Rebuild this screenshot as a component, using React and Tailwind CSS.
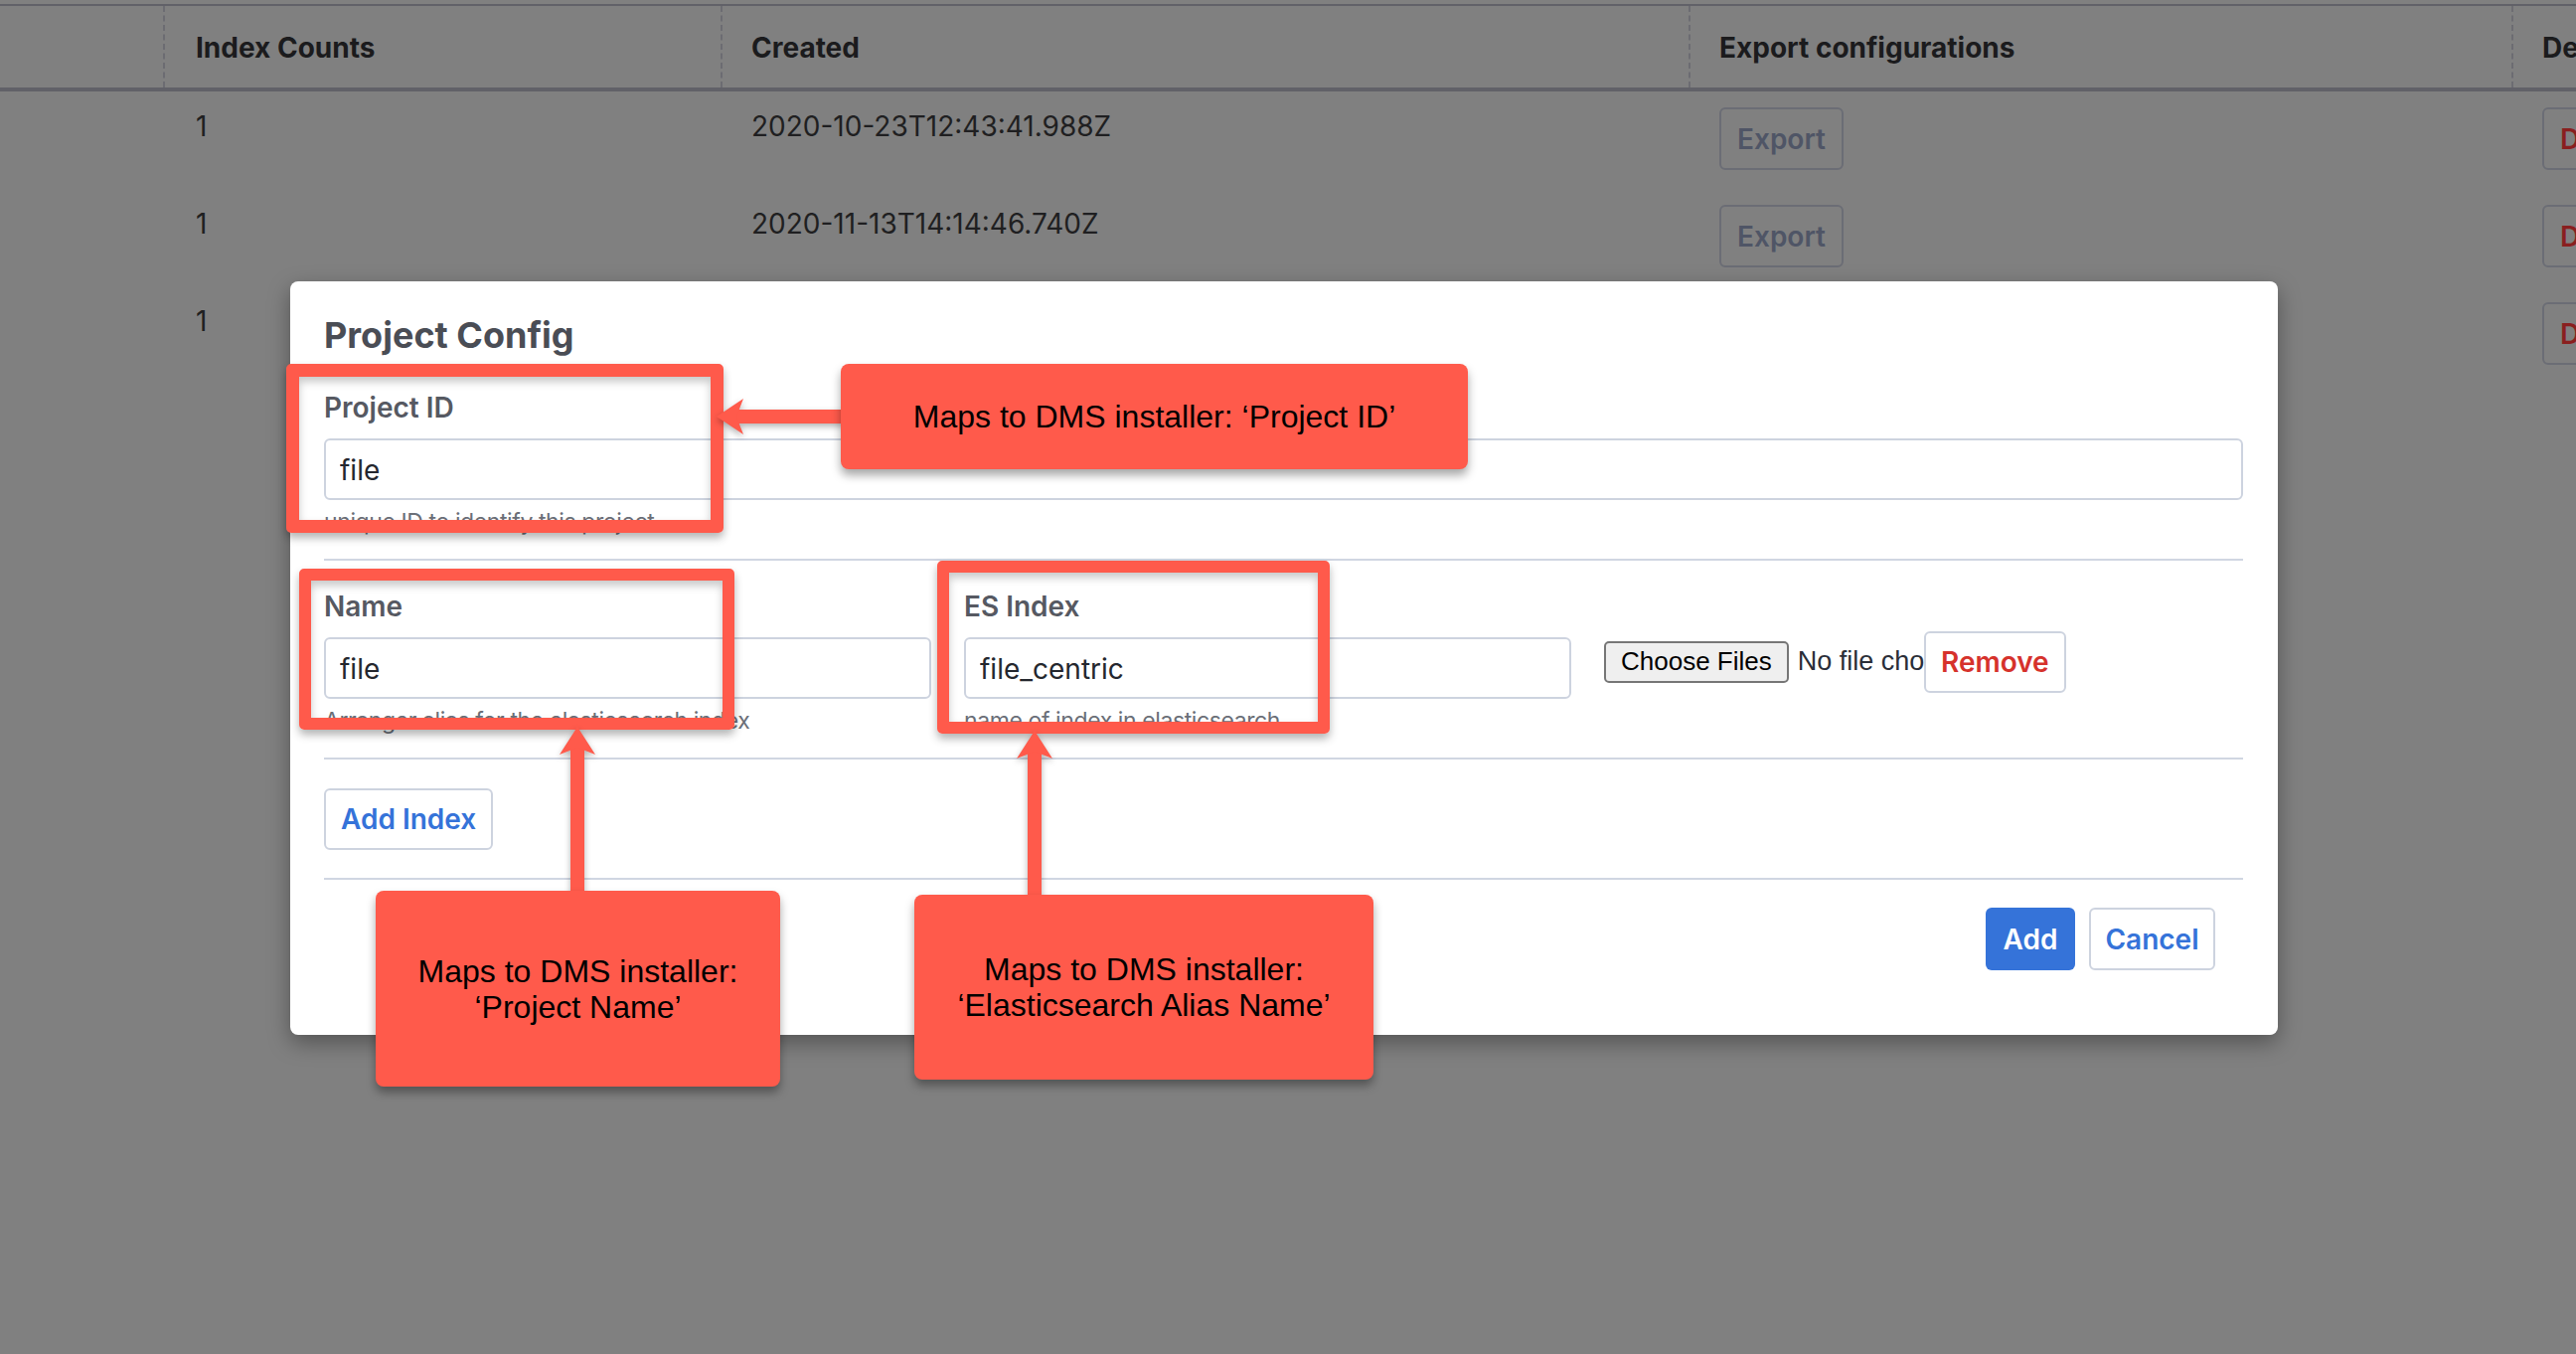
import React from 'react';

const rows = [
  { count: '1', created: '2020-10-23T12:43:41.988Z' },
  { count: '1', created: '2020-11-13T14:14:46.740Z' },
  { count: '1', created: '2020-11-20T09:31:07.112Z' },
];

function Table() {
  return (
    <div className="pt-[4px] w-[2900px]">
      {/* header */}
      <div className="grid grid-cols-[164px_561px_974px_828px_373px] h-[88px] border-t-2 border-b-4 border-[#616168] text-[28px] font-bold text-[#1b1b1d]">
        <div />
        <div className="flex items-center pl-[31px] pt-[2px] border-l-2 border-dashed border-[#6c6c72]">Index Counts</div>
        <div className="flex items-center pl-[29px] pt-[2px] border-l-2 border-dashed border-[#6c6c72]">Created</div>
        <div className="flex items-center pl-[29px] pt-[2px] border-l-2 border-dashed border-[#6c6c72]">Export configurations</div>
        <div className="flex items-center pl-[29px] pt-[2px] border-l-2 border-dashed border-[#6c6c72]">Delete</div>
      </div>
      {rows.map((r, i) => (
        <div key={i} className="grid grid-cols-[164px_561px_974px_828px_373px] h-[98px] text-[28px] leading-[38px] text-[#1f1f21]">
          <div />
          <div className="pt-[16px] pl-[33px]">{r.count}</div>
          <div className="pt-[16px] pl-[31px]">{r.created}</div>
          <div className="pt-[16px] pl-[31px]">
            <button className="h-[63px] px-[16px] border-2 border-[#6b6d75] rounded-[6px] font-semibold text-[#4f5566]">Export</button>
          </div>
          <div className="pt-[16px] pl-[31px]">
            <button className="h-[63px] px-[16px] border-2 border-[#6b6d75] rounded-[6px] font-semibold text-[#8a1f1f]">Delete</button>
          </div>
        </div>
      ))}
    </div>
  );
}

function Field({ label, value, hint }) {
  return (
    <div className="w-[611px] shrink-0">
      <label className="block text-[28px] leading-[40px] font-semibold text-[#565962]">{label}</label>
      <input
        readOnly
        value={value}
        className="mt-[11px] w-full h-[62px] border-2 border-[#cdd3df] rounded-[6px] px-[14px] pt-[2px] text-[28px] text-[#24272e] outline-none"
      />
      <p className="mt-[6px] text-[23px] leading-[32px] tracking-[-0.4px] text-[#6b6f78] whitespace-nowrap">{hint}</p>
    </div>
  );
}

function Modal() {
  return (
    <div className="absolute left-[292px] top-[283px] w-[2000px] h-[758px] bg-white rounded-[8px] shadow-[0_8px_22px_rgba(0,0,0,0.35)] pl-[34px] pr-[35px] pt-[32px]">
      <h2 className="text-[36px] leading-[44px] font-bold text-[#4a4d55]">Project Config</h2>

      <div className="mt-[31px]">
        <label className="block text-[28px] leading-[40px] font-semibold text-[#565962]">Project ID</label>
        <input
          readOnly
          value="file"
          className="mt-[11px] w-full h-[62px] border-2 border-[#cdd3df] rounded-[6px] px-[14px] pt-[2px] text-[28px] text-[#24272e] outline-none"
        />
        <p className="mt-[6px] text-[23px] leading-[32px] tracking-[-0.4px] text-[#6b6f78]">unique ID to identify this project</p>
      </div>

      <div className="mt-[21px] h-[2px] bg-[#d0d6e2]" />

      <div className="mt-[26px] flex items-center gap-[33px]">
        <Field label="Name" value="file" hint="Arranger alias for the elasticsearch index" />
        <Field label="ES Index" value="file_centric" hint="name of index in elasticsearch" />
        <div className="flex items-center">
          <div className="w-[322px] overflow-hidden whitespace-nowrap flex items-center font-['Liberation_Sans',Arial,sans-serif] text-[26px]">
            <span className="shrink-0 h-[42px] px-[15px] flex items-center bg-[#efefef] border-2 border-[#767676] rounded-[5px] text-black">Choose Files</span>
            <span className="ml-[9px] text-[27px] text-[#2a2e38]">No file chosen</span>
          </div>
          <button className="h-[62px] px-[15px] border-2 border-[#cdd3df] rounded-[6px] text-[28px] font-semibold text-[#d6322c]">Remove</button>
        </div>
      </div>

      <div className="mt-[21px] h-[2px] bg-[#d0d6e2]" />

      <button className="mt-[29px] h-[62px] px-[15px] border-2 border-[#cdd3df] rounded-[6px] text-[28px] font-semibold text-[#3573d9]">Add Index</button>

      <div className="mt-[28px] h-[2px] bg-[#d0d6e2]" />

      <div className="mt-[28px] flex justify-end gap-[14px] pr-[28px]">
        <button className="h-[63px] w-[90px] rounded-[6px] bg-[#3573d9] text-[28px] font-semibold text-white">Add</button>
        <button className="h-[63px] w-[127px] border-2 border-[#cdd3df] rounded-[6px] text-[28px] font-semibold text-[#3573d9]">Cancel</button>
      </div>
    </div>
  );
}

function Annotations() {
  const callout =
    "absolute flex items-center justify-center text-center bg-[#ff5a4b] rounded-[8px] shadow-[0_6px_10px_rgba(0,0,0,0.35)] font-['Liberation_Sans',Arial,sans-serif] text-[32px] leading-[36px] text-black";
  const frame =
    'absolute border-[12px] border-[#ff5a4b] rounded-[5px] shadow-[0_5px_9px_rgba(0,0,0,0.3),inset_0_5px_9px_rgba(0,0,0,0.22)]';
  return (
    <>
      {/* outline frames */}
      <div className={frame + ' left-[288px] top-[366px] w-[440px] h-[170px] border-[13px]'} />
      <div className={frame + ' left-[301px] top-[572px] w-[438px] h-[162px]'} />
      <div className={frame + ' left-[943px] top-[564px] w-[395px] h-[174px]'} />

      {/* arrows */}
      <svg className="absolute left-0 top-0 drop-shadow-[0_3px_3px_rgba(0,0,0,0.3)]" width="2592" height="1362">
        <g fill="#ff5a4b">
          <rect x="738" y="412" width="112" height="14" />
          <polygon points="721,419 748,401 741,419 748,437" />
          <rect x="574" y="752" width="14" height="148" />
          <polygon points="581,731 599,759 581,752 563,759" />
          <rect x="1034" y="756" width="14" height="148" />
          <polygon points="1041,735 1059,763 1041,756 1023,763" />
        </g>
      </svg>

      {/* callouts */}
      <div className={callout + ' left-[846px] top-[366px] w-[631px] h-[106px]'}>Maps to DMS installer: ‘Project ID’</div>
      <div className={callout + ' left-[378px] top-[896px] w-[407px] h-[197px]'}>
        Maps to DMS installer:
        <br />
        ‘Project Name’
      </div>
      <div className={callout + ' left-[920px] top-[900px] w-[462px] h-[186px]'}>
        Maps to DMS installer:
        <br />
        ‘Elasticsearch Alias Name’
      </div>
    </>
  );
}

export default function App() {
  return (
    <div className="relative w-[2592px] h-[1362px] overflow-hidden bg-[#808080] font-['Inter',sans-serif]">
      <Table />
      <Modal />
      <Annotations />
    </div>
  );
}
